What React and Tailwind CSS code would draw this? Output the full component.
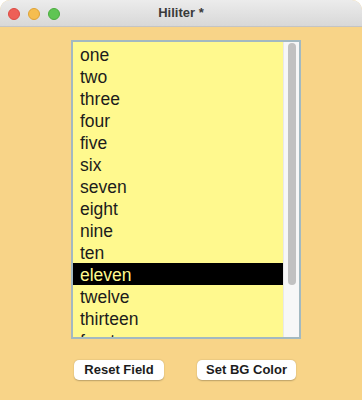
import React from "react";

const items = ["one","two","three","four","five","six","seven","eight","nine","ten","eleven","twelve","thirteen","fourteen","fifteen"];

export default function App() {
  return (
    <div className="w-[362px] h-[400px] bg-white" style={{ fontFamily: '"Liberation Sans", Arial, sans-serif' }}>
      <div className="w-[362px] h-[400px] rounded-t-[10px] overflow-hidden flex flex-col bg-[#f8d488]">
        <div className="h-[27px] shrink-0 relative flex items-center justify-center bg-gradient-to-b from-[#ececec] to-[#d8d8d8] border-b border-[#c4c4c4]">
          <div className="absolute left-[8px] top-[8px] flex gap-[8px]">
            <div className="w-[12px] h-[12px] rounded-full bg-[#ee5f57] border border-[#dc4a43]"></div>
            <div className="w-[12px] h-[12px] rounded-full bg-[#f5bd4f] border border-[#dea236]"></div>
            <div className="w-[12px] h-[12px] rounded-full bg-[#5fc553] border border-[#4aac3e]"></div>
          </div>
          <span className="text-[13px] font-bold text-[#3a3a3a]">Hiliter *</span>
        </div>
        <div className="flex flex-col items-start pl-[71px] pt-[13px]">
          <div className="w-[230px] h-[299px] border-2 border-[#a3b9c1] bg-[#fff98e] flex overflow-hidden">
            <div className="flex-1 pt-[1px] overflow-hidden">
              {items.map((t, i) => (
                <div
                  key={t}
                  className={
                    "h-[22px] leading-[24px] pl-[7px] text-[17.5px] " +
                    (i === 10 ? "bg-black text-[#fff98e]" : "text-[#1c1c1c]")
                  }
                >
                  {t}
                </div>
              ))}
            </div>
            <div className="w-[16px] bg-[#f7f7f7] border-l border-[#e8e8e8] flex justify-center pt-[1px]">
              <div className="w-[8px] h-[242px] rounded-full bg-[#c1c1c1]"></div>
            </div>
          </div>
          <div className="flex w-[222px] ml-[3px] justify-between mt-[21px]">
            <button className="w-[90px] h-[20px] rounded-[5px] bg-white shadow-[0_0.5px_1.5px_rgba(0,0,0,0.25)] text-[13px] font-bold text-[#1c1c1c] leading-[20px]">Reset Field</button>
            <button className="w-[99px] h-[20px] rounded-[5px] bg-white shadow-[0_0.5px_1.5px_rgba(0,0,0,0.25)] text-[13px] font-bold text-[#1c1c1c] leading-[20px]">Set BG Color</button>
          </div>
        </div>
      </div>
    </div>
  );
}
